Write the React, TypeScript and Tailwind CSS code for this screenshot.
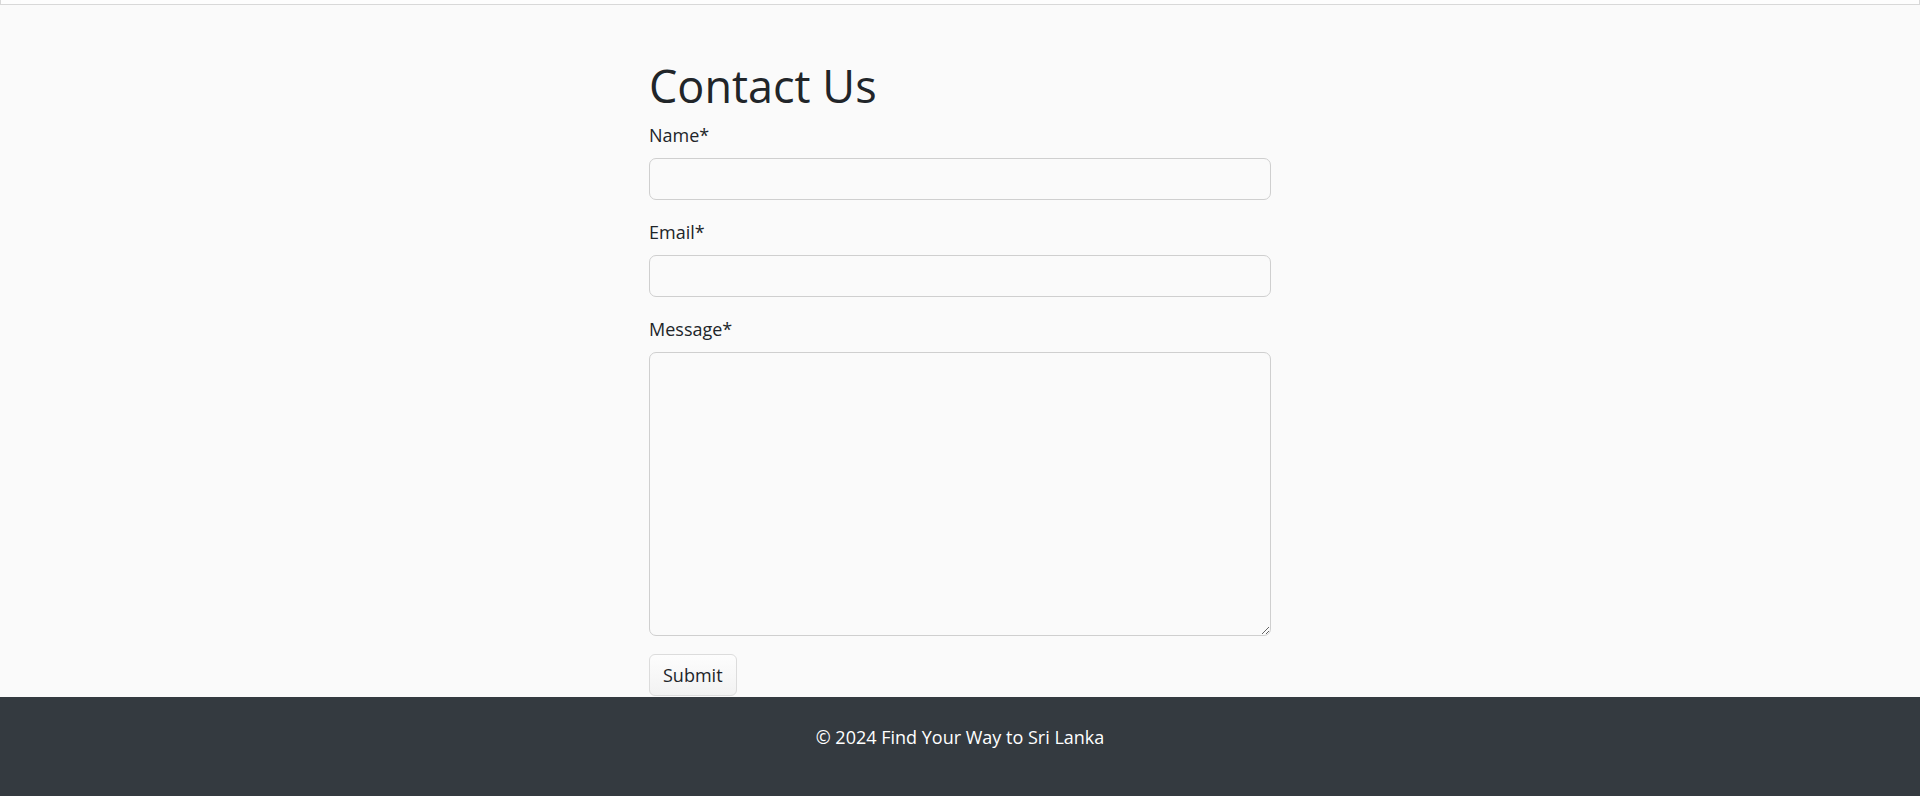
export default function App() {
	return (
		<div className="min-h-[796px] flex flex-col bg-[#fafafa] text-[#212529] font-['Open_Sans',sans-serif] text-[18px] leading-[1.5]">
			{/* Collapsed top bar */}
			<div className="h-[5px] bg-[#fdfdfd] border border-t-0 border-[#d8d8d8]" />

			<main className="flex-1">
				<div className="w-[622px] mx-auto pt-[54px]">
					<h1 className="text-[45px] leading-[1.2] font-normal mb-[9px]">Contact Us</h1>
					<form>
						<div className="mb-[19px]">
							<label className="block mb-[9px]">Name*</label>
							<input
								type="text"
								className="block w-full h-[42px] px-[13.5px] bg-transparent border border-[#cfcfcf] rounded-[7px] outline-none"
							/>
						</div>
						<div className="mb-[19px]">
							<label className="block mb-[9px]">Email*</label>
							<input
								type="email"
								className="block w-full h-[42px] px-[13.5px] bg-transparent border border-[#cfcfcf] rounded-[7px] outline-none"
							/>
						</div>
						<div className="mb-[18px]">
							<label className="block mb-[9px]">Message*</label>
							<textarea className="block w-full h-[284px] px-[13.5px] py-[7px] bg-transparent border border-[#cfcfcf] rounded-[7px] outline-none resize-y" />
						</div>
						<button
							type="submit"
							className="h-[42px] px-[13px] bg-linear-to-b from-[#fdfdfd] to-[#f2f2f2] border border-[#dcdcdc] rounded-[6px] text-[#212529]"
						>
							Submit
						</button>
					</form>
				</div>
			</main>

			<footer className="bg-[#343a40] text-white text-center pt-[27px] pb-[45px]">
				<p>© 2024 Find Your Way to Sri Lanka</p>
			</footer>
		</div>
	);
}
